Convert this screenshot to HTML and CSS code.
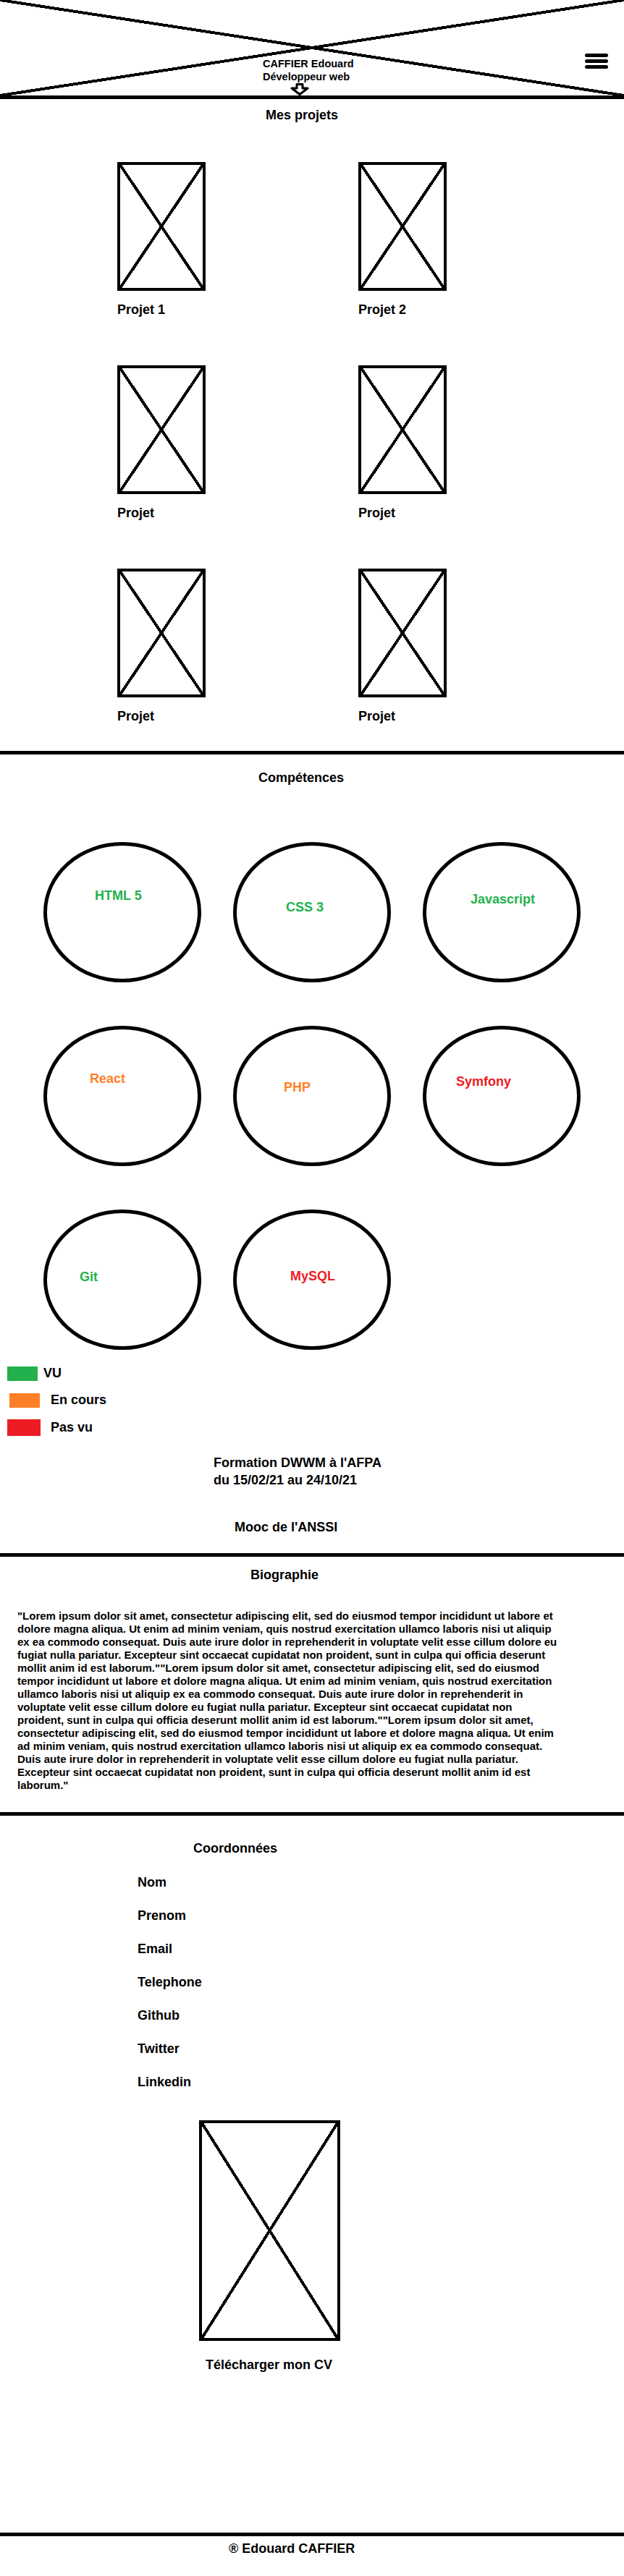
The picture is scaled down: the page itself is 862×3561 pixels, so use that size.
FILE: index.html
```html
<!DOCTYPE html>
<html lang="fr">
<head>
  <meta charset="UTF-8" />
  <meta name="viewport" content="width=device-width, initial-scale=1.0">
  <title>CAFFIER Edouard - Développeur web</title>
  <link rel="stylesheet" href="styles.css">
</head>
<body>
  <header class="site-header">
    <div class="identity">
      <p class="identity-name">CAFFIER Edouard</p>
      <p class="identity-job">Développeur web</p>
      <a href="#projets" class="scroll-down" aria-label="Descendre">
        <svg width="28" height="17" viewBox="0 0 28 17">
          <path d="M10 1.5 H18 V7 H25 L14 15.5 L3 7 H10 Z" fill="#fff" stroke="#000" stroke-width="3" stroke-linejoin="round" />
        </svg>
      </a>
    </div>
    <button class="burger" aria-label="Menu"><span></span><span></span><span></span></button>
  </header>

  <main>
    <section class="projects" id="projets">
      <h2 class="section-title title-projects">Mes projets</h2>
      <div class="projects-grid">
        <article class="project">
          <div class="placeholder project-thumb"></div>
          <h3 class="project-name">Projet 1</h3>
        </article>
        <article class="project">
          <div class="placeholder project-thumb"></div>
          <h3 class="project-name">Projet 2</h3>
        </article>
        <article class="project">
          <div class="placeholder project-thumb"></div>
          <h3 class="project-name">Projet</h3>
        </article>
        <article class="project">
          <div class="placeholder project-thumb"></div>
          <h3 class="project-name">Projet</h3>
        </article>
        <article class="project">
          <div class="placeholder project-thumb"></div>
          <h3 class="project-name">Projet</h3>
        </article>
        <article class="project">
          <div class="placeholder project-thumb"></div>
          <h3 class="project-name">Projet</h3>
        </article>
      </div>
    </section>

    <section class="skills">
      <h2 class="section-title title-skills">Compétences</h2>
      <div class="skills-grid">
        <div class="skill skill-html seen">HTML 5</div>
        <div class="skill skill-css seen">CSS 3</div>
        <div class="skill skill-js seen">Javascript</div>
        <div class="skill skill-react doing">React</div>
        <div class="skill skill-php doing">PHP</div>
        <div class="skill skill-symfony todo">Symfony</div>
        <div class="skill skill-git seen">Git</div>
        <div class="skill skill-mysql todo">MySQL</div>
      </div>

      <ul class="legend">
        <li class="legend-item"><span class="swatch swatch-green"></span>VU</li>
        <li class="legend-item"><span class="swatch swatch-orange"></span>En cours</li>
        <li class="legend-item"><span class="swatch swatch-red"></span>Pas vu</li>
      </ul>

      <p class="training">Formation DWWM à l'AFPA<br>du 15/02/21 au 24/10/21</p>
      <p class="mooc">Mooc de l'ANSSI</p>
    </section>

    <section class="bio">
      <h2 class="section-title title-bio">Biographie</h2>
      <p class="bio-text">"Lorem ipsum dolor sit amet, consectetur adipiscing elit, sed do eiusmod tempor incididunt ut labore et dolore magna aliqua. Ut enim ad minim veniam, quis nostrud exercitation ullamco laboris nisi ut aliquip ex ea commodo consequat. Duis aute irure dolor in reprehenderit in voluptate velit esse cillum dolore eu fugiat nulla pariatur. Excepteur sint occaecat cupidatat non proident, sunt in culpa qui officia deserunt mollit anim id est laborum.""Lorem ipsum dolor sit amet, consectetur adipiscing elit, sed do eiusmod tempor incididunt ut labore et dolore magna aliqua. Ut enim ad minim veniam, quis nostrud exercitation ullamco laboris nisi ut aliquip ex ea commodo consequat. Duis aute irure dolor in reprehenderit in voluptate velit esse cillum dolore eu fugiat nulla pariatur. Excepteur sint occaecat cupidatat non proident, sunt in culpa qui officia deserunt mollit anim id est laborum.""Lorem ipsum dolor sit amet, consectetur adipiscing elit, sed do eiusmod tempor incididunt ut labore et dolore magna aliqua. Ut enim ad minim veniam, quis nostrud exercitation ullamco laboris nisi ut aliquip ex ea commodo consequat. Duis aute irure dolor in reprehenderit in voluptate velit esse cillum dolore eu fugiat nulla pariatur. Excepteur sint occaecat cupidatat non proident, sunt in culpa qui officia deserunt mollit anim id est laborum."</p>
    </section>

    <section class="contact">
      <h2 class="section-title title-contact">Coordonnées</h2>
      <ul class="contact-list">
        <li>Nom</li>
        <li>Prenom</li>
        <li>Email</li>
        <li>Telephone</li>
        <li>Github</li>
        <li>Twitter</li>
        <li>Linkedin</li>
      </ul>
      <div class="cv">
        <div class="placeholder cv-thumb"></div>
        <a href="#" class="cv-link">Télécharger mon CV</a>
      </div>
    </section>
  </main>

  <footer class="site-footer">
    <p>® Edouard CAFFIER</p>
  </footer>
</body>
</html>
```

FILE: styles.css
```css
:root {
  --ink: #000000;
  --green: #22b14c;
  --orange: #ff7f27;
  --red: #ed1c24;
  --rule: 5px solid #000000;
  --cross-a: linear-gradient(to top right, transparent calc(50% - 2px), #000 calc(50% - 2px), #000 calc(50% + 2px), transparent calc(50% + 2px));
  --cross-b: linear-gradient(to bottom right, transparent calc(50% - 2px), #000 calc(50% - 2px), #000 calc(50% + 2px), transparent calc(50% + 2px));
}

* {
  box-sizing: border-box;
}

body {
  margin: 0;
  font-family: "Liberation Sans", Arial, sans-serif;
  font-weight: bold;
  color: var(--ink);
  background: #ffffff;
}

p,
h2,
h3,
ul {
  margin: 0;
  padding: 0;
}

a {
  color: inherit;
  text-decoration: none;
}

/* image placeholders : rectangle barré d'une croix */
.placeholder {
  border: 4px solid var(--ink);
  background: var(--cross-a), var(--cross-b);
}

/* ---------- header ---------- */
.site-header {
  display: flex;
  align-items: flex-start;
  height: 137px;
  padding-top: 74px;
  border-bottom: var(--rule);
  background: var(--cross-a), var(--cross-b);
}

.identity {
  margin: 5px 0 0 363px;
  font-size: 14.5px;
  line-height: 18px;
}

.scroll-down {
  display: block;
  width: 28px;
  height: 17px;
  margin-left: 37px;
}

.scroll-down svg {
  display: block;
}

.burger {
  display: flex;
  flex-direction: column;
  gap: 3px;
  width: 32px;
  margin: 0 22px 0 auto;
  padding: 0;
  border: none;
  background: none;
  cursor: pointer;
}

.burger span {
  display: block;
  height: 5px;
  border-radius: 3px;
  background: var(--ink);
}

/* ---------- titres ---------- */
.section-title {
  font-size: 18px;
  line-height: 21px;
}

.title-projects {
  margin: 12px 0 0 367px;
}

.title-skills {
  margin-left: 357px;
}

.title-bio {
  margin-left: 346px;
}

.title-contact {
  margin-left: 267px;
}

/* ---------- projets ---------- */
.projects {
  padding-bottom: 37px;
}

.projects-grid {
  display: grid;
  grid-template-columns: 122px 122px;
  column-gap: 211px;
  row-gap: 66px;
  margin: 54px 0 0 162px;
}

.project-thumb {
  height: 178px;
}

.project-name {
  margin-top: 16px;
  font-size: 18px;
  line-height: 21px;
  white-space: nowrap;
}

/* ---------- compétences ---------- */
.skills {
  border-top: var(--rule);
  padding: 22px 0 25px;
}

.skills-grid {
  display: grid;
  grid-template-columns: repeat(3, 218px);
  column-gap: 44px;
  row-gap: 60px;
  margin: 78px 0 0 60px;
}

.skill {
  height: 194px;
  border: 5px solid var(--ink);
  border-radius: 50%;
  font-size: 18px;
  line-height: 21px;
}

.seen { color: var(--green); }
.doing { color: var(--orange); }
.todo { color: var(--red); }

.skill-html { padding: 59px 0 0 66px; }
.skill-css { padding: 75px 0 0 68px; }
.skill-js { padding: 64px 0 0 61px; }
.skill-react { padding: 58px 0 0 59px; }
.skill-php { padding: 70px 0 0 65px; }
.skill-symfony { padding: 62px 0 0 41px; }
.skill-git { padding: 78px 0 0 45px; }
.skill-mysql { padding: 77px 0 0 74px; }

.legend {
  display: flex;
  flex-direction: column;
  gap: 16px;
  margin: 22px 0 0 10px;
  list-style: none;
}

.legend-item {
  display: flex;
  align-items: center;
  font-size: 18px;
  line-height: 21px;
}

.swatch {
  width: 42px;
  height: 20px;
  margin-right: 8px;
}

.swatch-green {
  background: var(--green);
}

.swatch-orange {
  margin-left: 3px;
  margin-right: 15px;
  background: var(--orange);
}

.swatch-red {
  width: 46px;
  height: 23px;
  margin-right: 14px;
  background: var(--red);
}

.training {
  margin: 25px 0 0 295px;
  font-size: 18px;
  line-height: 24px;
}

.mooc {
  margin: 43px 0 0 324px;
  font-size: 18px;
  line-height: 21px;
}

/* ---------- biographie ---------- */
.bio {
  border-top: var(--rule);
  padding: 15px 0 28px;
}

.bio-text {
  width: 748px;
  margin: 37px 0 0 24px;
  font-size: 15px;
  line-height: 18px;
}

/* ---------- coordonnées ---------- */
.contact {
  border-top: var(--rule);
  padding: 35px 0 221px;
}

.contact-list {
  display: flex;
  flex-direction: column;
  gap: 25px;
  margin: 26px 0 0 190px;
  list-style: none;
  font-size: 18px;
  line-height: 21px;
}

.cv {
  width: 195px;
  margin: 42px 0 0 275px;
}

.cv-thumb {
  height: 305px;
}

.cv-link {
  display: block;
  width: max-content;
  margin: 23px 0 0 9px;
  font-size: 18px;
  line-height: 21px;
}

/* ---------- footer ---------- */
.site-footer {
  border-top: var(--rule);
  padding: 7px 0 26px 316px;
  font-size: 18px;
  line-height: 21px;
}
```
